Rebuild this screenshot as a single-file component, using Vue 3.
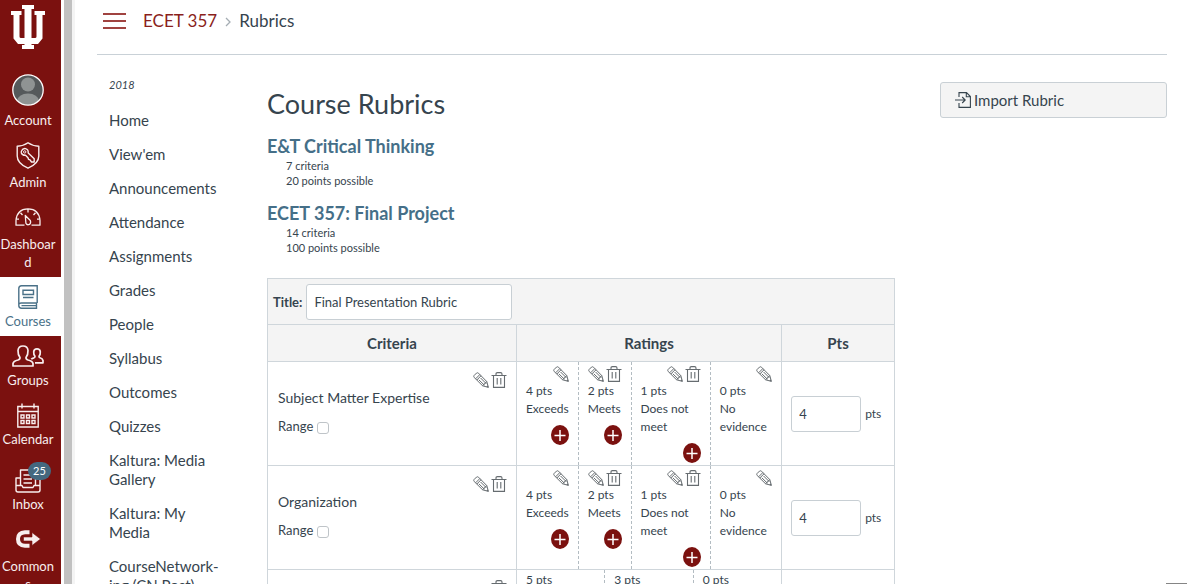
<script setup>
import { ref } from 'vue'

const navItems = [
  { label: 'Account', icon: 'account', roomy: true },
  { label: 'Admin', icon: 'admin', roomy: true },
  { label: 'Dashboard', icon: 'dashboard', roomy: true },
  { label: 'Courses', icon: 'courses', active: true },
  { label: 'Groups', icon: 'groups' },
  { label: 'Calendar', icon: 'calendar' },
  { label: 'Inbox', icon: 'inbox', badge: 25 },
  { label: 'Commons', icon: 'commons', roomy: true },
]

const courseLinks = [
  'Home', "View'em", 'Announcements', 'Attendance', 'Assignments', 'Grades',
  'People', 'Syllabus', 'Outcomes', 'Quizzes', 'Kaltura: Media Gallery',
  'Kaltura: My Media', 'CourseNetwork\u00ADing (CN Post)',
]

const rubrics = [
  { title: 'E&T Critical Thinking', criteria: 7, points: 20 },
  { title: 'ECET 357: Final Project', criteria: 14, points: 100 },
]

const ratings = [
  { points: 4, text: 'Exceeds', size: 'medium', add: true },
  { points: 2, text: 'Meets', size: 'narrow', removable: true, add: true },
  { points: 1, text: 'Does not meet', size: 'widest', removable: true, add: true },
  { points: 0, text: 'No evidence', size: 'wide' },
]

const title = ref('Final Presentation Rubric')
const criteria = ref([
  { name: 'Subject Matter Expertise', range: false, pts: '4' },
  { name: 'Organization', range: false, pts: '4' },
])
</script>

<template>
  <div class="app">
    <svg class="defs" aria-hidden="true">
      <symbol id="pencil" viewBox="0 0 16 16">
        <g fill="none" stroke="currentColor" stroke-width="1">
          <path d="M1 3.6 3.6 1Q4.6.4 5.5 1.2L13.8 9.6 15.4 15.4 9.6 13.8 1.2 5.5Q.4 4.6 1 3.6Z" />
          <path d="M2.6 6.8 6.8 2.6M3.8 8 8 3.8M5.8 7.8 11.4 13.2M7.6 6 13.2 11.6M9.6 13.8Q10 12.4 11.2 12.6Q11 11.2 12.6 11.2Q12.4 10 13.8 9.6" />
        </g>
        <path d="M13.2 14.8 15.4 15.4 14.8 13.2Z" fill="currentColor" />
      </symbol>
      <symbol id="trash" viewBox="0 0 16 16">
        <path d="M.5 3.5h15M5 3.5V2Q5 .6 6.4.6H9.6Q11 .6 11 2V3.5M2.5 3.5V15.4H13.5V3.5M6.2 6V12.6M9.8 6V12.6" fill="none" stroke="currentColor" stroke-width="1.1" />
      </symbol>
    </svg>

    <nav class="global-nav" aria-label="Global navigation">
      <a href="#" class="logo" aria-label="Home">
        <svg viewBox="0 0 34 44" width="34" height="44" fill="#fff">
          <path d="M11 0H23V4H20.500V33H24Q25.500 33 25.500 31.500V10H23.500V6H34V10H31.500V33.500L27 39H20.500V40H23V44H11V40H13.500V39H7L2.500 33.500V10H0V6H10.500V10H8.500V31.500Q8.500 33 10 33H13.500V4H11Z" />
        </svg>
      </a>
      <a
        v-for="item in navItems"
        :key="item.label"
        href="#"
        class="nav-item"
        :class="{ active: item.active, roomy: item.roomy }"
      >
        <span class="nav-icon" :class="item.icon">
          <svg v-if="item.icon === 'account'" width="32" height="32" viewBox="0 0 32 32">
            <clipPath id="face"><circle cx="16" cy="16" r="15" /></clipPath>
            <circle cx="16" cy="16" r="15" fill="#55595b" />
            <g clip-path="url(#face)" fill="#8f9393">
              <circle cx="16" cy="10.500" r="7" />
              <ellipse cx="16" cy="27" rx="11" ry="7.500" />
            </g>
            <circle cx="16" cy="16" r="15.200" fill="none" stroke="#fff" stroke-width="1.300" />
          </svg>
          <svg v-else-if="item.icon === 'admin'" width="24" height="27" viewBox="0 0 24 27" fill="none" stroke="currentColor" stroke-width="1.400" stroke-linejoin="round">
            <path d="M12 .8Q16.500 4 22.800 4.300V14Q22.800 21.500 12 26.200Q1.200 21.500 1.200 14V4.300Q7.500 4 12 .8Z" />
            <path d="M5.600 8.800Q6.800 6.200 9.500 6.600Q12.600 7.500 12.200 11L18.200 16.800V20H15.500L14 17.800 12.500 17.300 12 15.700 9.500 13.300Q6.200 13.500 5.400 11Q5.100 9.800 5.600 8.800Z" />
            <circle cx="8.700" cy="9.900" r="1.200" stroke-width="1" />
          </svg>
          <svg v-else-if="item.icon === 'dashboard'" width="26" height="18" viewBox="0 0 26 18" fill="none" stroke="currentColor" stroke-width="1.300" stroke-linejoin="round">
            <path d="M9.500 17.200H1V12.500Q1.800 1 13 .8Q24.200 1 25 12.500V17.200H16.500" />
            <path d="M13 1V4.500M5.500 4.800 7.500 7M20.500 4.800 18.500 7M1.500 11.200H4M24.500 11.200H22" />
            <path d="M10.300 7.500 15.300 12.500Q16.200 15 14.500 16.400Q12 17.500 10.900 15.200Z" />
          </svg>
          <svg v-else-if="item.icon === 'courses'" width="20" height="24" viewBox="0 0 20 24" fill="none" stroke="currentColor" stroke-width="1.400">
            <path d="M19.200 18V.8H3.500Q.8.800.8 3.500V20.500Q.8 23.200 3.500 23.200H18.500V18H3.300Q.8 18 .8 20.300M3.500 20.600H18" />
            <path d="M5 5.300H15.500V9.500H5ZM5 12.500H15.500" />
          </svg>
          <svg v-else-if="item.icon === 'groups'" width="32" height="22" viewBox="0 0 32 22" fill="none" stroke="currentColor" stroke-width="1.700" stroke-linejoin="round">
            <path d="M8 12.500Q5.800 9.500 6 5.500Q6.400 1 11 1Q15.600 1 16 5.500Q16.200 9.500 14 12.500Q13.800 14.200 16 15Q20.500 16 21 18.500V21H1V18.500Q1.500 16 6 15Q8.200 14.200 8 12.500Z" />
            <path d="M23 17.800H31V15.500Q30.500 13.500 28 12.800Q26.800 12.300 27 11.200Q28.500 9.500 28.300 6.800Q28 3.800 25 3.800Q22 3.800 21.700 6.800Q21.500 9.500 23 11.200Q23.200 12.300 22 12.800Q20 13.200 19.300 14.200" />
          </svg>
          <svg v-else-if="item.icon === 'calendar'" width="22" height="25" viewBox="0 0 22 25" fill="none" stroke="currentColor" stroke-width="1.400">
            <path d="M.8 3.500H21.200V24H.8ZM.8 8.500H21.200M5 .5V5.500M17 .5V5.500" />
            <path d="M4 12H7V15H4ZM9.500 12H12.500V15H9.500ZM15 12H18V15H15ZM4 17.500H7V20.500H4ZM9.500 17.500H12.500V20.500H9.500ZM15 17.500H18V20.500H15Z" />
          </svg>
          <svg v-else-if="item.icon === 'inbox'" width="26" height="24" viewBox="0 0 26 24" fill="none" stroke="currentColor" stroke-width="1.400" stroke-linejoin="round">
            <path d="M5.500 16V1H20.500V16M5.500 9H1V21Q1 23 3 23H23Q25 23 25 21V9H20.500M1 16.500H7L8 18.500H18L19 16.500H25" />
            <path d="M8.500 6H17M8.500 10H17M8.500 14H17" />
          </svg>
          <svg v-else width="26" height="20" viewBox="0 0 26 20">
            <path d="M14.500 3.200H10Q3 3.500 3 10Q3 16.500 10 16.800H14.500" fill="none" stroke="currentColor" stroke-width="4" />
            <path d="M8.500 8H17V3.500L25.500 10 17 16.500V12H8.500Z" fill="currentColor" stroke="#7b110f" stroke-width=".6" />
          </svg>
          <span v-if="item.badge" class="badge">{{ item.badge }}</span>
        </span>
        <span class="nav-label">{{ item.label }}</span>
      </a>
    </nav>
    <div class="divider"></div>

    <div class="page">
      <header class="crumbs">
        <button type="button" class="menu" aria-label="Toggle course menu"><i></i><i></i><i></i></button>
        <a href="#">ECET 357</a>
        <svg class="chevron" width="6" height="10" viewBox="0 0 6 10"><path d="M1 1 5 5 1 9" fill="none" stroke="#a5adb3" stroke-width="1.300" /></svg>
        <span>Rubrics</span>
      </header>

      <div class="columns">
        <nav class="course-nav" aria-label="Course navigation">
          <p class="term">2018</p>
          <a v-for="link in courseLinks" :key="link" href="#">{{ link }}</a>
        </nav>

        <main class="content">
          <h1>Course Rubrics</h1>
          <section v-for="r in rubrics" :key="r.title" class="rubric">
            <h2><a href="#">{{ r.title }}</a></h2>
            <p>{{ r.criteria }} criteria</p>
            <p>{{ r.points }} points possible</p>
          </section>

          <table class="grid">
            <colgroup><col class="c1" /><col class="c2" /><col class="c3" /></colgroup>
            <thead>
              <tr>
                <td colspan="3" class="title-cell">
                  <div class="title-row">
                    <label for="rubric-title">Title:</label>
                    <input id="rubric-title" v-model="title" type="text" />
                  </div>
                </td>
              </tr>
              <tr class="heads"><th>Criteria</th><th>Ratings</th><th>Pts</th></tr>
            </thead>
            <tbody>
              <tr v-for="(c, i) in criteria" :key="c.name">
                <td class="criterion">
                  <div class="tools">
                    <button type="button" aria-label="Edit criterion"><svg><use href="#pencil" /></svg></button>
                    <button type="button" aria-label="Delete criterion"><svg><use href="#trash" /></svg></button>
                  </div>
                  <div class="name">{{ c.name }}</div>
                  <div class="range">
                    <label :for="'range-' + i">Range</label>
                    <input :id="'range-' + i" v-model="c.range" type="checkbox" />
                  </div>
                </td>
                <td class="ratings-cell">
                  <div class="ratings">
                    <div v-for="r in ratings" :key="r.points" class="rating" :class="r.size">
                      <div class="tools">
                        <button type="button" aria-label="Edit rating"><svg><use href="#pencil" /></svg></button>
                        <button v-if="r.removable" type="button" aria-label="Delete rating"><svg><use href="#trash" /></svg></button>
                      </div>
                      <div>{{ r.points }} pts</div>
                      <div>{{ r.text }}</div>
                      <button v-if="r.add" type="button" class="add" aria-label="Add rating">
                        <svg viewBox="0 0 18 20"><path d="M3.500 10.500H14.500M9 5V16" stroke="#fff" stroke-width="1.500" /></svg>
                      </button>
                    </div>
                  </div>
                </td>
                <td class="pts-cell">
                  <div class="pts">
                    <input :id="'pts-' + i" v-model="c.pts" type="text" />
                    <label :for="'pts-' + i">pts</label>
                  </div>
                </td>
              </tr>
              <tr>
                <td class="criterion">
                  <div class="tools">
                    <button type="button" aria-label="Delete criterion"><svg><use href="#trash" /></svg></button>
                  </div>
                </td>
                <td class="ratings-cell">
                  <div class="ratings">
                    <div v-for="p in [5, 3, 0]" :key="p" class="rating third">{{ p }} pts</div>
                  </div>
                </td>
                <td class="pts-cell"></td>
              </tr>
            </tbody>
          </table>
        </main>

        <aside class="side">
          <button type="button" class="import">
            <svg width="16" height="16" viewBox="0 0 16 16" fill="none" stroke="currentColor" stroke-width="1.100">
              <path d="M4 5V.6H11.500L15.400 4.500V15.400H4V11M11.300.8V4.700H15.200M0 8H10M7.200 5 10.200 8 7.200 11" />
            </svg>
            Import Rubric
          </button>
        </aside>
      </div>
    </div>
    <div class="corner"></div>
  </div>
</template>

<style>
html,
body {
  overflow: hidden;
}
</style>

<style scoped>
* {
  box-sizing: border-box;
}
.app {
  display: flex;
  height: 100vh;
  overflow: hidden;
  background: #fff;
  color: #36444e;
  font-family: Lato, "Liberation Sans", sans-serif;
  font-size: 13px;
  line-height: 18px;
}
.defs {
  position: absolute;
  width: 0;
  height: 0;
}
a {
  color: inherit;
  text-decoration: none;
}
button {
  padding: 0;
  border: 0;
  background: none;
  color: inherit;
  font: inherit;
}
p,
h1,
h2 {
  margin: 0;
}
.global-nav {
  flex: none;
  width: 61px;
  background: #7b110f;
  color: #f8eeee;
}
.logo {
  display: block;
  height: 67px;
  padding: 5px 0 0 11px;
}
.logo svg,
.nav-icon svg {
  display: block;
}
.nav-item {
  display: flex;
  flex-direction: column;
  align-items: center;
  gap: 2px;
  padding: 7px 5px 6px 0;
}
.nav-item.roomy {
  gap: 5px;
}
.nav-item.active {
  background: #fff;
  color: #4a7188;
}
.nav-icon {
  position: relative;
  display: flex;
  align-items: center;
  justify-content: center;
  width: 32px;
  height: 26px;
}
.nav-icon.account {
  height: 32px;
}
.nav-icon.inbox {
  height: 32px;
  align-items: flex-end;
}
.badge {
  position: absolute;
  top: 1px;
  right: -7px;
  width: 23px;
  border-radius: 10px;
  background: #44687f;
  color: #fff;
  font-size: 11px;
  text-align: center;
}
.nav-label {
  width: 56px;
  font-size: 13px;
  text-align: center;
  overflow-wrap: anywhere;
}
.divider {
  flex: none;
  width: 11px;
  margin-left: 3px;
  border-left: 8px solid #c1c1c1;
  background: #f4f4f4;
}
.page {
  flex: 1;
  min-width: 0;
  padding: 0 20px 0 22px;
}
.crumbs {
  display: flex;
  align-items: center;
  height: 55px;
  padding: 0 0 12px 6px;
  border-bottom: 1px solid #c9d1d7;
  font-size: 17px;
}
.crumbs a {
  color: #8a1f1c;
}
.menu {
  display: flex;
  flex-direction: column;
  gap: 5px;
  width: 23px;
  margin-right: 17px;
}
.menu i {
  height: 2px;
  background: #a04340;
}
.chevron {
  margin: 2px 8px 0;
}
.columns {
  display: flex;
}
.course-nav {
  flex: none;
  width: 170px;
  padding: 21px 46px 0 12px;
}
.term {
  margin-bottom: 10px;
  font-size: 11px;
  font-style: italic;
}
.course-nav a {
  display: block;
  padding: 7px 0 8px;
  font-size: 15px;
  line-height: 19px;
}
.content {
  flex: 1;
  min-width: 0;
  padding-top: 32px;
}
h1 {
  margin-bottom: 14px;
  font-size: 27px;
  font-weight: 400;
  line-height: 34px;
}
.rubric {
  height: 67px;
}
h2 {
  color: #456f88;
  font-size: 18px;
  line-height: 23px;
}
.rubric p {
  padding-left: 19px;
  font-size: 11px;
  line-height: 15px;
}
.rubric:nth-of-type(2) {
  margin-bottom: 9px;
}
.grid {
  width: 100%;
  border-collapse: collapse;
  table-layout: fixed;
}
.grid td,
.grid th {
  padding: 0;
  border: 1px solid #cfd6db;
}
.c1 {
  width: 39.7%;
}
.c2 {
  width: 42.3%;
}
.c3 {
  width: 18%;
}
.title-row {
  display: flex;
  align-items: center;
  gap: 4px;
  height: 45px;
  padding-left: 5px;
  background: #f4f4f4;
  font-size: 13px;
  font-weight: 700;
}
input[type="text"] {
  height: 36px;
  padding: 0 7px;
  border: 1px solid #c8cfd4;
  border-radius: 3px;
  background: #fff;
  color: inherit;
  font: inherit;
  font-size: 13px;
}
.title-row input[type="text"] {
  width: 206px;
  font-weight: 400;
}
.heads th {
  height: 37px;
  background: #f4f4f4;
  font-size: 15px;
}
.criterion {
  vertical-align: top;
}
.tools {
  display: flex;
  justify-content: flex-end;
  gap: 2px;
}
.tools svg {
  display: block;
  width: 16px;
  height: 16px;
  color: #666c70;
}
.criterion > .tools {
  padding: 10px 9px 0 0;
}
.name {
  padding: 1px 10px 0;
  font-size: 14px;
}
.range {
  display: flex;
  align-items: center;
  gap: 4px;
  padding: 10px 10px 0;
}
.range input {
  appearance: none;
  width: 12px;
  height: 12px;
  margin: 4px 0 0;
  border: 1px solid #bfc4c8;
  border-radius: 3px;
}
.ratings {
  display: flex;
  min-height: 103px;
  font-size: 12px;
}
.rating {
  min-width: 0;
  padding: 1px 9px 0;
  border-left: 1px dashed #b3bcc2;
}
.rating:first-child {
  border-left: 0;
}
.rating .tools {
  padding-top: 3px;
}
.rating.medium {
  width: 23%;
}
.rating.narrow {
  width: 20%;
}
.rating.widest {
  width: 30%;
}
.rating.wide {
  width: 27%;
}
.rating.third {
  flex: 1 1 0;
}
.add {
  display: block;
  width: 18px;
  height: 20px;
  margin: 7px 0 0 auto;
  border-radius: 50%;
  background: #7b110f;
}
.add svg {
  display: block;
  fill: none;
}
.pts {
  display: flex;
  align-items: center;
  gap: 4px;
  padding-left: 9px;
  font-size: 12px;
}
.pts input[type="text"] {
  width: 70px;
}
.side {
  flex: none;
  width: 227px;
  margin: 27px 0 0 45px;
}
.import {
  display: flex;
  align-items: center;
  gap: 3px;
  width: 100%;
  height: 36px;
  padding-left: 14px;
  border: 1px solid #c9d0d5;
  border-radius: 3px;
  background: #f4f4f4;
  font-size: 15px;
}
.corner {
  position: fixed;
  right: 0;
  bottom: 0;
  width: 21px;
  height: 1px;
  background: #858585;
}
</style>
